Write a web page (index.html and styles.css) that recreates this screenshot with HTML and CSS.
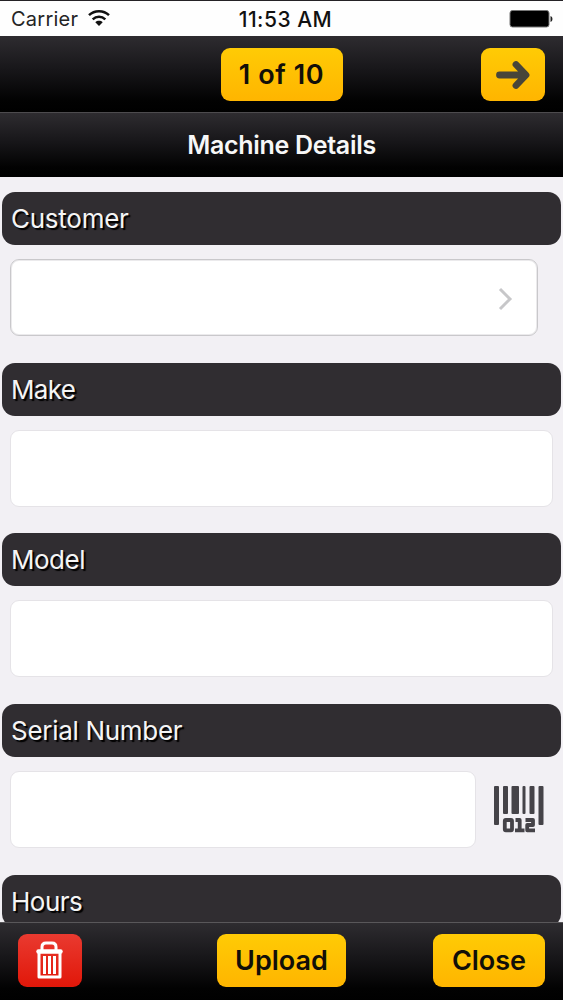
FILE: index.html
```html
<!DOCTYPE html>
<html lang="en">
<head>
<meta charset="utf-8">
<title>Machine Details</title>
<link rel="stylesheet" href="styles.css">
</head>
<body>
<div class="screen">
  <header class="status">
    <div class="carrier"><span>Carrier</span>
      <svg class="wifi" width="22" height="17" viewBox="0 0 22 17" fill="none" stroke="#111" stroke-width="2.500"><path d="M1 5.200C6.500 0 15.500 0 21 5.200M4.700 9.300c3.600-3.400 9-3.400 12.600 0"/><path d="M7.300 12.200c2.100-1.900 5.300-1.900 7.400 0L11 16z" fill="#111" stroke="none"/></svg>
    </div>
    <span class="time">11:53 AM</span>
    <svg class="battery" width="44" height="18" viewBox="0 0 44 18"><rect x="1" y=".5" width="39" height="16.500" rx="2.500" fill="#000" stroke="#777"/><path d="M41.500 6q2 .5 2 3t-2 3z" fill="#222"/></svg>
  </header>
  <nav class="bar topbar">
    <span></span>
    <button class="btn count"><span>1 of 10</span></button>
    <button class="btn next" aria-label="Next"><svg width="34" height="30" viewBox="0 0 34 30" fill="none" stroke="#484539" stroke-width="6.800" stroke-linecap="round" stroke-linejoin="round"><path d="M3.500 15H29M20 4.500 30 15 20 25.500"/></svg></button>
  </nav>
  <div class="bar titlebar"><h1>Machine Details</h1></div>
  <main class="form">
    <section class="group"><h2><span class="t-customer">Customer</span></h2>
      <div class="field select"><svg width="15" height="24" viewBox="0 0 15 24" fill="none" stroke="#c7c7c9" stroke-width="3"><path d="M2 2l10 10L2 22"/></svg></div></section>
    <section class="group"><h2><span class="t-make">Make</span></h2><div class="field"></div></section>
    <section class="group"><h2><span class="t-model">Model</span></h2><div class="field"></div></section>
    <section class="group"><h2><span class="t-serial">Serial Number</span></h2>
      <div class="row"><div class="field"></div>
        <svg class="barcode" width="50" height="47" viewBox="0 0 50 47" fill="#454348"><rect width="5" height="39" rx="1"/><rect x="9" width="5" height="28" rx="1"/><rect x="17.500" width="7.500" height="28" rx="1"/><rect x="28.500" width="3" height="28" rx="1"/><rect x="35.500" width="5" height="28" rx="1"/><rect x="44.500" width="5" height="39" rx="1"/><g fill="none" stroke="#454348" stroke-width="3.800" stroke-linejoin="round"><rect x="10.800" y="34" width="7.200" height="10.300" rx="1"/><path d="M21.500 34H25.700V44M21 44.300H30.500M31.500 34H39V39H33.200V44.300H41"/></g></svg>
      </div></section>
    <section class="group"><h2><span class="t-hours">Hours</span></h2></section>
  </main>
  <footer class="bar bottombar">
    <button class="btn trash" aria-label="Delete"><svg width="30" height="38" viewBox="0 0 30 38" fill="none" stroke="#fff" stroke-linejoin="round"><path stroke-width="3" d="M7 9V6Q7 2 11 2H17Q21 2 21 6V9"/><path stroke-width="4.500" stroke-linecap="round" d="M3.500 10.500H25.500"/><path stroke-width="3" d="M4 12V36H25V12"/><path stroke-width="3" d="M9.500 15V33M14.500 15V33M19.500 15V33"/></svg></button>
    <button class="btn upload"><span>Upload</span></button>
    <button class="btn close"><span>Close</span></button>
  </footer>
</div>
</body>
</html>
```
FILE: styles.css
```css
* { box-sizing: border-box; }
body { margin: 0; font-family: Inter, "Liberation Sans", sans-serif; }
.screen { width: 563px; height: 1000px; display: flex; flex-direction: column; background: #f2f0f4; overflow: hidden; }
.status { height: 36px; flex: none; display: grid; grid-template-columns: 1fr auto 1fr; align-items: center; padding: 1px 10px 0 11px; background: #fefefe; border-top: 1px solid #242226; }
.carrier { display: flex; align-items: center; gap: 10px; font-size: 20px; color: #242424; }
.carrier span { letter-spacing: .25px; }
.wifi { margin-top: -2px; }
.time { font-size: 21px; font-weight: 500; letter-spacing: .5px; color: #111; margin: 0 0 0 7px; }
.battery { justify-self: end; }
.bar { flex: none; background: linear-gradient(#2e2c30, #171619 45%, #020202 85%, #000); }
.topbar { height: 76px; display: grid; grid-template-columns: 1fr auto 1fr; align-items: center; padding: 1px 18px 0; }
.btn { border: 0; padding: 0; height: 53px; border-radius: 9px; display: flex; align-items: center; justify-content: center; font: 600 27px Inter, sans-serif; color: #120f08; background: linear-gradient(#ffcb05, #ffb500); white-space: nowrap; }
.count { width: 122px; letter-spacing: .6px; }
.next { width: 64px; justify-self: end; }
.next svg { margin-top: 1px; }
.titlebar { height: 65px; border-top: 1px solid #4d4b4e; display: flex; align-items: center; justify-content: center; }
h1 { margin: 0; font-size: 25px; font-weight: 600; letter-spacing: -.3px; color: #f7f7f7; white-space: nowrap; }
.form { flex: none; height: 745px; padding: 15.300px 2px 0; overflow: hidden; }
.group { height: 170.600px; }
h2 { margin: 0; height: 52.700px; padding-left: 9px; border-radius: 13px; background: #302d31; display: flex; align-items: center; font-size: 26px; font-weight: 400; color: #f5f5f5; text-shadow: 2px 2px 1px #000; white-space: nowrap; }
.t-customer { letter-spacing: -.25px; }
.t-make { letter-spacing: -.7px; }
.t-model { letter-spacing: -.5px; }
.t-serial { letter-spacing: -.3px; }
.t-hours { letter-spacing: -.5px; }
.field { height: 77px; margin: 14.200px 8px 0 8px; background: #fff; border: 1px solid #e5e3e7; border-radius: 9px; }
.select { width: 528px; border-color: #c9c8cb; box-shadow: inset 0 0 0 1px #ebeaec; display: flex; align-items: center; justify-content: flex-end; padding: 2px 24px 0 0; }
.row { display: flex; }
.row .field { width: 466px; flex: none; }
.barcode { margin: 29px 0 0 10px; }
.bottombar { height: 78px; border-top: 1px solid #59575a; padding: 0 18px 2px; display: grid; grid-template-columns: 1fr auto 1fr; align-items: center; }
.bottombar .btn { height: 53px; margin-bottom: 1px; }
.trash { width: 64px; background: linear-gradient(#e93a30, #e11709); }
.upload { width: 129px; }
.close { width: 112px; justify-self: end; }
```
